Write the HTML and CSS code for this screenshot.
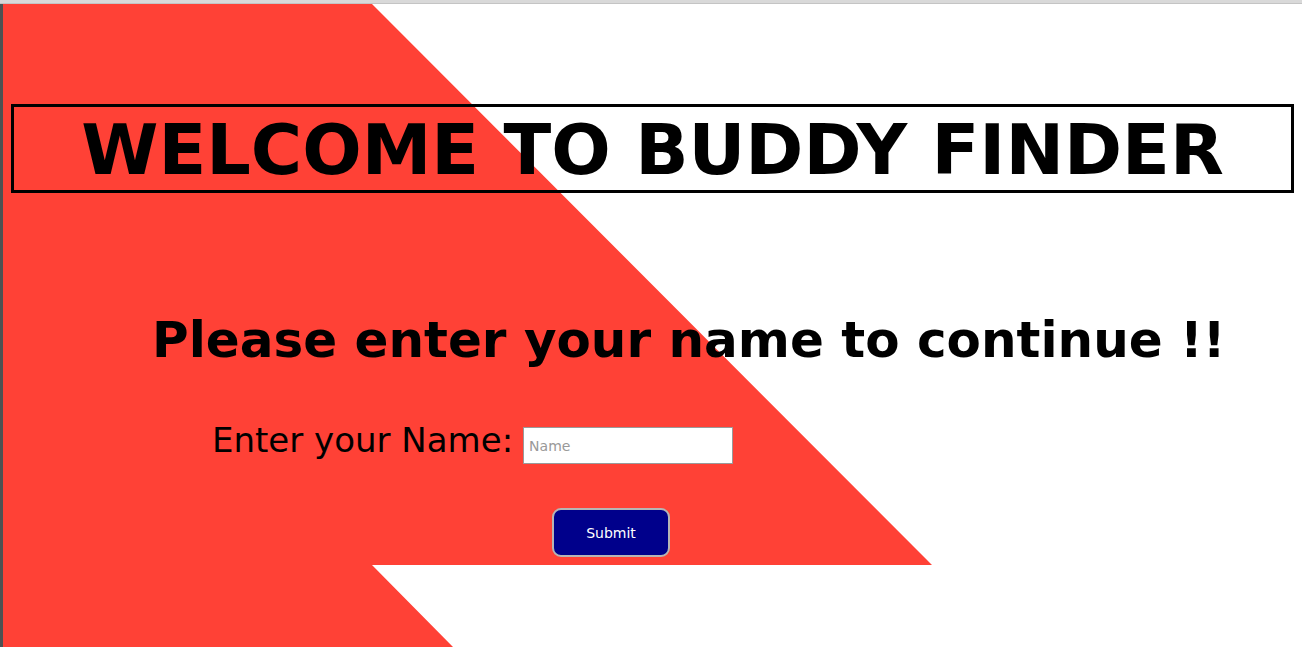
FILE: index.html
```html
<!DOCTYPE html>
<html lang="en">
<head>
<meta charset="utf-8">
<title>Buddy Finder</title>
<link rel="stylesheet" href="styles.css">
</head>
<body>
<div class="topbar"></div>
<div class="frame">
  <div class="sidebar"></div>
  <main class="page">
    <svg class="bg" width="1299" height="643" viewBox="0 0 1299 643" aria-hidden="true">
      <polygon points="0,0 369,0 929,561 369,561 450,643 0,643" fill="#ff4136"/>
    </svg>
    <h1 class="title">WELCOME TO BUDDY FINDER</h1>
    <h2 class="prompt">Please enter your name to continue !!</h2>
    <form class="form">
      <div class="row">
        <label class="label" for="name">Enter your Name:</label>
        <input class="input" id="name" type="text" placeholder="Name">
      </div>
      <div class="actions">
        <button class="btn" type="button">Submit</button>
      </div>
    </form>
  </main>
</div>
</body>
</html>
```

FILE: styles.css
```css
html, body {
  margin: 0;
  padding: 0;
  background: #ffffff;
  overflow: hidden;
}
body {
  width: 1302px;
  height: 647px;
  font-family: "DejaVu Sans", sans-serif;
}
.topbar {
  height: 3px;
  background: #d9d9d9;
  border-bottom: 1px solid #c4c4c4;
}
.frame {
  display: flex;
  height: 643px;
}
.sidebar {
  width: 3px;
  background: #4f5152;
  flex: none;
}
.page {
  position: relative;
  flex: 1;
  padding: 100px 8px 0;
  overflow: hidden;
}
.bg {
  position: absolute;
  left: 0;
  top: 0;
  z-index: 0;
}
.title, .prompt, .form {
  position: relative;
  z-index: 1;
}
.title {
  margin: 0;
  border: 3px solid #000;
  height: 83px;
  box-sizing: content-box;
  font-size: 70px;
  font-weight: bold;
  line-height: 86px;
  text-align: center;
  color: #000;
}
.prompt {
  margin: 118px 0 0;
  padding-left: 141px;
  font-size: 50px;
  font-weight: bold;
  line-height: 58px;
  color: #000;
}
.form {
  margin-top: 58px;
}
.row {
  display: flex;
  align-items: flex-start;
  padding-left: 201px;
  gap: 10px;
}
.label {
  font-size: 34px;
  line-height: 40px;
  margin-top: -7px;
  color: #000;
}
.input {
  width: 210px;
  height: 37px;
  box-sizing: border-box;
  border: 1px solid #9a9a9a;
  background: #fff;
  padding: 0 5px;
  font-family: "DejaVu Sans", sans-serif;
  font-size: 14px;
  margin: 0;
}
.input::placeholder {
  color: #999999;
}
.actions {
  padding-left: 541px;
  margin-top: 44px;
}
.btn {
  width: 118px;
  height: 49px;
  box-sizing: border-box;
  background: #00008b;
  color: #fff;
  border: 2px solid #b5b5b5;
  border-radius: 9px;
  font-family: "DejaVu Sans", sans-serif;
  font-size: 14px;
}
```
